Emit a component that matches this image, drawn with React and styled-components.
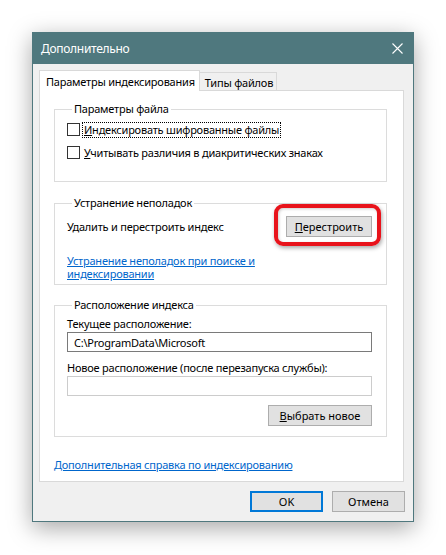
import React from 'react';
import styled, { createGlobalStyle } from 'styled-components';

const GlobalStyle = createGlobalStyle`
  html, body {
    margin: 0;
    padding: 0;
    background: #ffffff;
  }
  body {
    font-family: "Segoe UI", "Noto Sans", sans-serif;
    font-size: 11px;
    letter-spacing: -0.22px;
    color: #000000;
  }
`;

const Page = styled.div`
  padding: 32px 0 0 32px;
  height: 523px;
`;

const Window = styled.div`
  width: 380px;
  height: 488px;
  border: 1px solid #4f787e;
  background: #f0f0f0;
  display: flex;
  flex-direction: column;
  box-shadow: 0 6px 22px rgba(0, 0, 0, 0.35);
`;

const TitleBar = styled.div`
  height: 31px;
  background: #4f787e;
  color: #ffffff;
  display: flex;
  align-items: center;
  justify-content: space-between;
  padding: 0 10px 0 8px;
  font-size: 12px;
  letter-spacing: -0.3px;
`;

const CloseIcon = styled.svg`
  width: 11px;
  height: 11px;
  display: block;
`;

const Body = styled.div`
  flex: 1;
  display: flex;
  flex-direction: column;
  padding: 6px 9px 9px 6px;
`;

const TabStrip = styled.div`
  display: flex;
  align-items: flex-end;
  height: 21px;
  margin-bottom: -1px;
  position: relative;
  z-index: 1;
`;

const Tab = styled.div`
  height: ${({ active }) => (active ? '21px' : '19px')};
  padding: ${({ active }) => (active ? '0 4px 0 6px' : '1px 3px 0 5px')};
  border: 1px solid #d9d9d9;
  border-bottom: ${({ active }) => (active ? 'none' : '1px solid #d9d9d9')};
  border-left: ${({ first }) => (first ? '1px solid #d9d9d9' : 'none')};
  background: ${({ active }) => (active ? '#ffffff' : '#f0f0f0')};
  display: flex;
  align-items: center;
  box-sizing: border-box;
  white-space: nowrap;
`;

const Panel = styled.div`
  flex: 1;
  background: #ffffff;
  border: 1px solid #d9d9d9;
  padding: 10px 16px 0 14px;
  display: flex;
  flex-direction: column;
`;

const Group = styled.fieldset`
  margin: 0 0 ${({ mb }) => mb || '0'} 0;
  min-width: 0;
  border: 1px solid #dcdcdc;
  padding: ${({ pad }) => pad || '0 12px'};
  display: flex;
  flex-direction: column;
`;

const Legend = styled.legend`
  padding: 0 2px;
  margin-left: 5px;
  line-height: 16px;
`;

const CheckRow = styled.label`
  display: flex;
  align-items: center;
  height: 17px;
  margin-top: ${({ mt }) => mt || '0'};
`;

const Box = styled.span`
  width: 11px;
  height: 11px;
  border: 1px solid #333333;
  background: #ffffff;
  margin-right: 3px;
  flex-shrink: 0;
`;

const CheckText = styled.span`
  padding: 0 1px;
  line-height: 14px;
  outline: ${({ focused }) => (focused ? '1px dotted #000000' : 'none')};
`;

const Under = styled.span`
  text-decoration: underline;
`;

const FixRow = styled.div`
  display: flex;
  align-items: center;
  justify-content: space-between;
  position: relative;
  margin-top: 5px;
`;

const Button = styled.button`
  font: inherit;
  color: #000000;
  width: ${({ w }) => w};
  height: 21px;
  background: #e1e1e1;
  border: ${({ primary }) => (primary ? '2px solid #0078d7' : '1px solid #adadad')};
  padding: 0;
  box-sizing: border-box;
  cursor: default;
`;

const Highlight = styled.div`
  position: absolute;
  right: -9px;
  top: -12px;
  width: 107px;
  height: 42px;
  box-sizing: border-box;
  border: 4px solid #e8131b;
  border-radius: 9px;
  box-shadow: 1px 2px 4px rgba(0, 0, 0, 0.35), inset 1px 1px 3px rgba(0, 0, 0, 0.2);
  pointer-events: none;
`;

const Link = styled.a`
  color: #0066cc;
  text-decoration: underline;
  line-height: 13px;
  margin-top: ${({ mt }) => mt || '0'};
  display: block;
`;

const FieldLabel = styled.div`
  line-height: 16px;
  margin-top: ${({ mt }) => mt || '0'};
`;

const Input = styled.div`
  height: 20px;
  box-sizing: border-box;
  border: 1px solid ${({ dim }) => (dim ? '#cccccc' : '#7a7a7a')};
  background: #ffffff;
  padding: 0 6px;
  display: flex;
  align-items: center;
  flex-shrink: 0;
`;

const RightAlign = styled.div`
  display: flex;
  justify-content: flex-end;
  margin-top: 9px;
`;

const Footer = styled.div`
  display: flex;
  justify-content: flex-end;
  gap: 9px;
  padding-top: 9px;
  margin-right: -1px;
`;

export default function App() {
  return (
    <>
      <GlobalStyle />
      <Page>
        <Window>
          <TitleBar>
            <span>Дополнительно</span>
            <CloseIcon viewBox="0 0 11 11">
              <path d="M0.5 0.5 L10.5 10.5 M10.5 0.5 L0.5 10.5" stroke="#ffffff" strokeWidth="1.1" fill="none" />
            </CloseIcon>
          </TitleBar>
          <Body>
            <TabStrip>
              <Tab active first>Параметры индексирования</Tab>
              <Tab>Типы файлов</Tab>
            </TabStrip>
            <Panel>
              <Group pad="0 12px 20px 12px" mb="13px">
                <Legend>Параметры файла</Legend>
                <CheckRow mt="4px">
                  <Box />
                  <CheckText focused>
                    <Under>И</Under>ндексировать шифрованные файлы
                  </CheckText>
                </CheckRow>
                <CheckRow mt="6px">
                  <Box />
                  <CheckText>
                    <Under>У</Under>читывать различия в диакритических знаках
                  </CheckText>
                </CheckRow>
              </Group>
              <Group pad="0 14px 4px 12px" mb="12px">
                <Legend>Устранение неполадок</Legend>
                <FixRow>
                  <span>Удалить и перестроить индекс</span>
                  <Button w="86px">
                    <Under>П</Under>ерестроить
                  </Button>
                  <Highlight />
                </FixRow>
                <Link href="#" mt="17px">
                  Устранение неполадок при поиске и
                  <br />
                  индексировании
                </Link>
              </Group>
              <Group pad="0 14px 10px 12px">
                <Legend>Расположение индекса</Legend>
                <FieldLabel mt="3px">Текущее расположение:</FieldLabel>
                <Input>C:\ProgramData\Microsoft</Input>
                <FieldLabel mt="8px">Новое расположение (после перезапуска службы):</FieldLabel>
                <Input dim />
                <RightAlign>
                  <Button w="104px">
                    <Under>В</Under>ыбрать новое
                  </Button>
                </RightAlign>
              </Group>
              <Link href="#" mt="21px">Дополнительная справка по индексированию</Link>
            </Panel>
            <Footer>
              <Button w="73px" primary>OK</Button>
              <Button w="73px">Отмена</Button>
            </Footer>
          </Body>
        </Window>
      </Page>
    </>
  );
}
